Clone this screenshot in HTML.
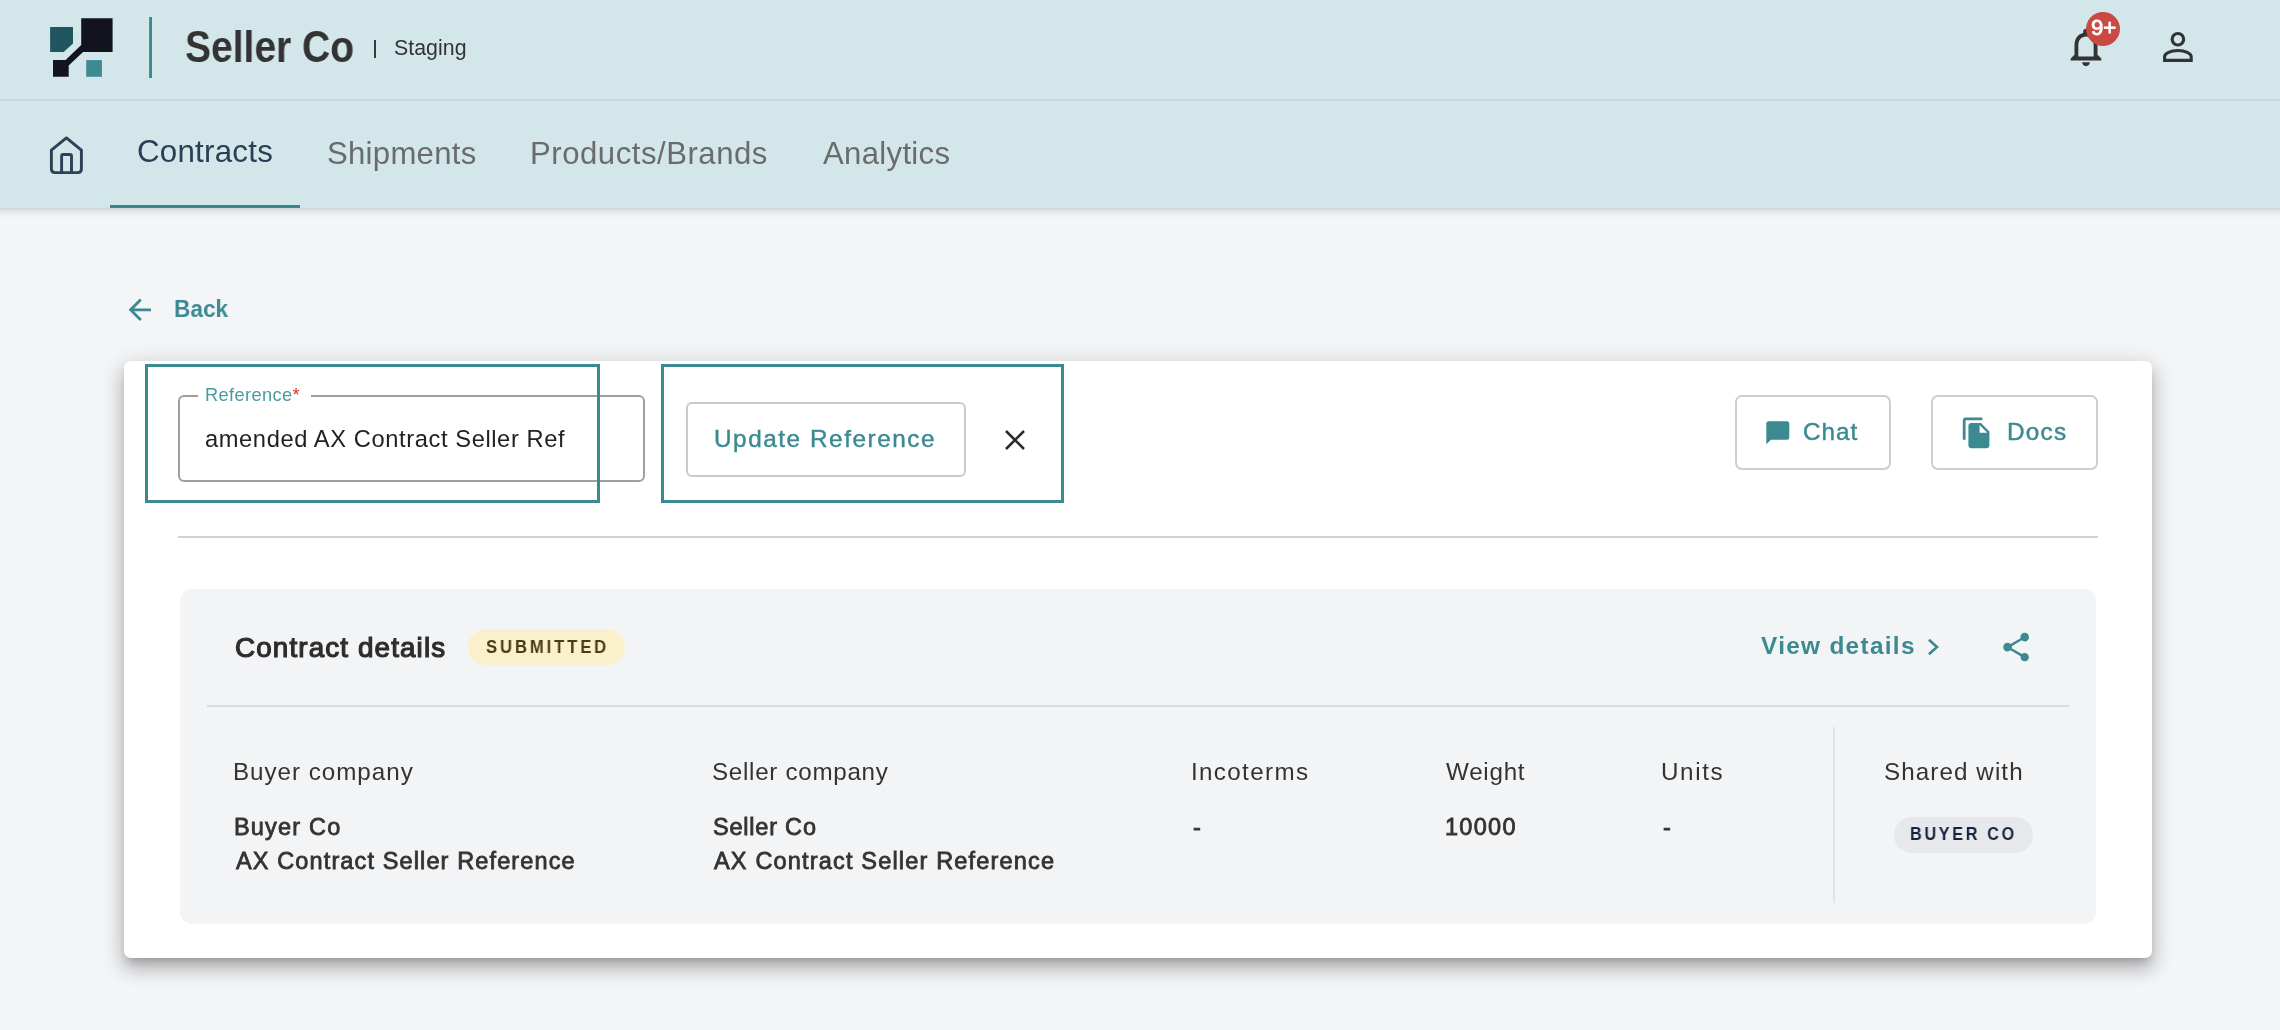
<!DOCTYPE html>
<html><head><meta charset="utf-8"><style>
html,body{margin:0;padding:0;}
body{width:2280px;height:1030px;position:relative;overflow:hidden;background:#f4f5f7;font-family:"Liberation Sans",sans-serif;}
.t{position:absolute;white-space:nowrap;will-change:transform;}
.a{position:absolute;box-sizing:border-box;}
</style></head><body>
<!-- header -->
<div class="a" style="left:0;top:0;width:2280px;height:99px;background:#d3e7ea"></div>
<div class="a" style="left:0;top:99px;width:2280px;height:2px;background:#d4d5db"></div>
<div class="a" style="left:0;top:101px;width:2280px;height:107px;background:#d3e7ea"></div>
<div class="a" style="left:0;top:208px;width:2280px;height:12px;background:linear-gradient(rgba(0,0,0,0.15) 0px,rgba(0,0,0,0.09) 2px,rgba(0,0,0,0.04) 5px,rgba(0,0,0,0.012) 8px,rgba(0,0,0,0) 12px)"></div>
<div class="a" style="left:110px;top:205px;width:190px;height:3px;background:#36868c"></div>
<svg class="a" style="left:0;top:0" width="240" height="100" viewBox="0 0 240 100">
  <path d="M50.1 27.1H73V43.4L63.7 51.9H50.1Z" fill="#215660"/>
  <path d="M81.2 18.2H112.6V51.9H83.1L68.7 65.5V76.8H53V60.1H65.6L81.2 45Z" fill="#13131f"/>
  <rect x="86.2" y="60.1" width="15.7" height="16.7" fill="#3e8a91"/>
  <rect x="149.1" y="17" width="2.9" height="61" fill="#3b8a91"/>
</svg>
<div class="a" style="left:374px;top:39.8px;width:1.6px;height:18px;background:#3a3a3a"></div>
<!-- bell -->
<svg class="a" style="left:2063px;top:24.3px" width="46" height="46" viewBox="0 0 24 24"><path fill="#333" d="M12 22c1.1 0 2-.9 2-2h-4c0 1.1.89 2 2 2zm6-6v-5c0-3.07-1.64-5.64-4.5-6.32V4c0-.83-.67-1.5-1.5-1.5s-1.5.67-1.5 1.5v.68C7.63 5.36 6 7.92 6 11v5l-2 2v1h16v-1l-2-2zm-2 1H8v-6c0-2.48 1.51-4.5 4-4.5s4 2.02 4 4.5v6z"/></svg>
<div class="a" style="left:2086.1px;top:11.6px;width:34px;height:34px;border-radius:50%;background:#c94a44"></div>
<!-- person -->
<svg class="a" style="left:2150px;top:20px" width="60" height="60" viewBox="2150 20 60 60">
  <circle cx="2177.9" cy="39.2" r="5.75" fill="none" stroke="#333" stroke-width="3.15"/>
  <path d="M2164.6 60.35V56.6A13.3 6.1 0 0 1 2191.2 56.6V60.35Z" fill="none" stroke="#333" stroke-width="3.1" stroke-linejoin="miter"/>
</svg>
<!-- home -->
<svg class="a" style="left:40px;top:126px" width="60" height="60" viewBox="40 126 60 60">
  <path d="M66.4 137.9L51.4 150.2V169Q51.4 172.6 55 172.6H77.8Q81.4 172.6 81.4 169V150.2Z" fill="none" stroke="#2d4058" stroke-width="2.9" stroke-linejoin="round"/>
  <path d="M61.6 172.6V156Q61.6 154.5 63.1 154.5H70Q71.5 154.5 71.5 156V172.6" fill="none" stroke="#2d4058" stroke-width="2.9"/>
</svg>
<!-- back arrow -->
<svg class="a" style="left:123.3px;top:293.3px" width="33.6" height="33.6" viewBox="0 0 24 24"><path fill="#3b8a91" d="M20 11H7.83l5.59-5.59L12 4l-8 8 8 8 1.41-1.41L7.83 13H20v-2z"/></svg>
<!-- card -->
<div class="a" style="left:124px;top:361px;width:2028px;height:597px;background:#fff;border-radius:7px;box-shadow:0px 7px 8px -4px rgba(0,0,0,0.2),0px 12px 17px 2px rgba(0,0,0,0.14),0px 5px 22px 4px rgba(0,0,0,0.12)"></div>
<!-- input -->
<div class="a" style="left:178px;top:395.3px;width:467px;height:86.7px;border:2.5px solid #9f9f9f;border-radius:6px"></div>
<div class="a" style="left:197.5px;top:390px;width:113.75px;height:10px;background:#fff"></div>
<!-- teal highlight boxes -->
<div class="a" style="left:144.5px;top:363.5px;width:455px;height:139.5px;border:3px solid #3b8a91"></div>
<div class="a" style="left:660.6px;top:363.5px;width:403px;height:139.9px;border:3px solid #3b8a91"></div>
<!-- update button -->
<div class="a" style="left:686px;top:402px;width:280px;height:75px;border:2px solid #c9cad1;border-radius:6px"></div>
<svg class="a" style="left:1000px;top:425px" width="32" height="32" viewBox="1000 425 32 32"><path d="M1006 431L1024 449M1024 431L1006 449" stroke="#2a2a2a" stroke-width="2.6"/></svg>
<!-- chat / docs buttons -->
<div class="a" style="left:1735px;top:395.4px;width:156px;height:74.6px;border:2px solid #cdced5;border-radius:7px"></div>
<div class="a" style="left:1931.4px;top:395.4px;width:166.4px;height:74.6px;border:2px solid #cdced5;border-radius:7px"></div>
<svg class="a" style="left:1763.7px;top:418.6px" width="27.6" height="27.6" viewBox="0 0 24 24"><path fill="#3b8a91" d="M20 2H4c-1.1 0-2 .9-2 2v18l4-4h14c1.1 0 2-.9 2-2V4c0-1.1-.9-2-2-2z"/></svg>
<svg class="a" style="left:1960.3px;top:415.7px" width="33.6" height="33.6" viewBox="0 0 24 24"><path fill="#3b8a91" d="M16 1H4c-1.1 0-2 .9-2 2v14h2V3h12V1zm-1 4l6 6v10c0 1.1-.9 2-2 2H7.99C6.89 23 6 22.1 6 21l.01-14c0-1.1.89-2 1.99-2h7zm-1 7h5.5L14 6.5V12z"/></svg>
<!-- divider -->
<div class="a" style="left:178px;top:536px;width:1920px;height:2px;background:#cfd1d8"></div>
<!-- panel -->
<div class="a" style="left:180px;top:589px;width:1916px;height:334.5px;background:#f3f4f6;border-radius:12px"></div>
<div class="a" style="left:468.4px;top:628.9px;width:156.6px;height:36px;border-radius:18px;background:#faf0cc"></div>
<svg class="a" style="left:1920px;top:630px" width="30" height="30" viewBox="1920 630 30 30"><path d="M1928.9 639.7L1937 647L1928.9 654.3" fill="none" stroke="#3b8a91" stroke-width="2.6"/></svg>
<svg class="a" style="left:1998.8px;top:630px" width="34.3" height="34.3" viewBox="0 0 24 24"><path fill="#3b8a91" d="M18 16.08c-.76 0-1.44.3-1.96.77L8.91 12.7c.05-.23.09-.46.09-.7s-.04-.47-.09-.7l7.05-4.11c.54.5 1.25.81 2.04.81 1.66 0 3-1.340 3-3s-1.34-3-3-3-3 1.34-3 3c0 .24.04.47.09.7L8.04 9.81C7.5 9.31 6.790 9 6 9c-1.66 0-3 1.34-3 3s1.34 3 3 3c.79 0 1.5-.31 2.04-.81l7.12 4.16c-.05.21-.08.43-.08.65 0 1.61 1.31 2.92 2.92 2.92 1.61 0 2.92-1.31 2.92-2.92s-1.31-2.92-2.92-2.92z"/></svg>
<div class="a" style="left:207px;top:705px;width:1862px;height:2px;background:#d8dadf"></div>
<div class="a" style="left:1833px;top:727.4px;width:2px;height:176px;background:#e2e3e7"></div>
<div class="a" style="left:1893.6px;top:816.9px;width:139.3px;height:36px;border-radius:18px;background:#e6e8ec"></div>
<div class="t" id="sellerco" style="left:185.30px;top:25.72px;font-size:43.50px;line-height:43.50px;font-weight:700;color:#333333;letter-spacing:0.000px;transform:scaleX(0.8966);transform-origin:0 0;">Seller Co</div>
<div class="t" id="staging" style="left:393.70px;top:38.17px;font-size:21.30px;line-height:21.30px;font-weight:400;color:#333333;letter-spacing:0.050px;">Staging</div>
<div class="t" id="contracts" style="left:136.60px;top:136.10px;font-size:31.30px;line-height:31.30px;font-weight:400;color:#2c3e57;letter-spacing:0.237px;">Contracts</div>
<div class="t" id="shipments" style="left:326.70px;top:138.07px;font-size:31.10px;line-height:31.10px;font-weight:400;color:#6b6b6b;letter-spacing:0.288px;">Shipments</div>
<div class="t" id="products" style="left:530.20px;top:138.07px;font-size:31.10px;line-height:31.10px;font-weight:400;color:#6b6b6b;letter-spacing:0.536px;">Products/Brands</div>
<div class="t" id="analytics" style="left:823.00px;top:138.07px;font-size:31.10px;line-height:31.10px;font-weight:400;color:#6b6b6b;letter-spacing:0.325px;">Analytics</div>
<div class="t" id="back" style="left:174.40px;top:296.91px;font-size:24.20px;line-height:24.20px;font-weight:700;color:#3b8a91;letter-spacing:0.000px;transform:scaleX(0.9367);transform-origin:0 0;">Back</div>
<div class="t" id="reflabel" style="left:204.75px;top:386.47px;font-size:18.20px;line-height:18.20px;font-weight:400;color:#4a9aa1;letter-spacing:0.389px;">Reference<span style="color:#e0302a">*</span></div>
<div class="t" id="inputtxt" style="left:204.75px;top:427.93px;font-size:23.70px;line-height:23.70px;font-weight:400;color:#222222;letter-spacing:0.595px;">amended AX Contract Seller Ref</div>
<div class="t" id="update" style="left:714.40px;top:426.53px;font-size:24.30px;line-height:24.30px;font-weight:400;-webkit-text-stroke:0.45px #3b8a91;color:#3b8a91;letter-spacing:1.553px;">Update Reference</div>
<div class="t" id="chat" style="left:1803.40px;top:419.53px;font-size:24.30px;line-height:24.30px;font-weight:400;-webkit-text-stroke:0.45px #3b8a91;color:#3b8a91;letter-spacing:1.000px;">Chat</div>
<div class="t" id="docs" style="left:2006.80px;top:419.53px;font-size:24.30px;line-height:24.30px;font-weight:400;-webkit-text-stroke:0.45px #3b8a91;color:#3b8a91;letter-spacing:1.233px;">Docs</div>
<div class="t" id="cdetails" style="left:234.50px;top:633.76px;font-size:27.80px;line-height:27.80px;font-weight:400;-webkit-text-stroke:1.2px #2d2d2d;color:#2d2d2d;letter-spacing:1.133px;">Contract details</div>
<div class="t" id="submitted" style="left:485.50px;top:637.62px;font-size:18.40px;line-height:18.40px;font-weight:700;color:#4a3b12;letter-spacing:3.200px;transform:scaleX(0.9048);transform-origin:0 0;">SUBMITTED</div>
<div class="t" id="viewdetails" style="left:1760.60px;top:633.94px;font-size:24.40px;line-height:24.40px;font-weight:700;color:#3b8a91;letter-spacing:1.300px;">View details</div>
<div class="t" id="buyercompany" style="left:232.80px;top:759.51px;font-size:24.20px;line-height:24.20px;font-weight:400;color:#333333;letter-spacing:0.975px;">Buyer company</div>
<div class="t" id="buyerco" style="left:233.80px;top:815.50px;font-size:23.50px;line-height:23.50px;font-weight:400;-webkit-text-stroke:0.8px #333333;color:#333333;letter-spacing:1.186px;">Buyer Co</div>
<div class="t" id="axref1" style="left:235.80px;top:849.50px;font-size:23.50px;line-height:23.50px;font-weight:400;-webkit-text-stroke:0.8px #333333;color:#333333;letter-spacing:1.126px;">AX Contract Seller Reference</div>
<div class="t" id="sellercompany" style="left:712.30px;top:759.51px;font-size:24.20px;line-height:24.20px;font-weight:400;color:#333333;letter-spacing:0.700px;">Seller company</div>
<div class="t" id="sellerco2" style="left:713.30px;top:815.50px;font-size:23.50px;line-height:23.50px;font-weight:400;-webkit-text-stroke:0.8px #333333;color:#333333;letter-spacing:0.787px;">Seller Co</div>
<div class="t" id="axref2" style="left:714.30px;top:849.50px;font-size:23.50px;line-height:23.50px;font-weight:400;-webkit-text-stroke:0.8px #333333;color:#333333;letter-spacing:1.174px;">AX Contract Seller Reference</div>
<div class="t" id="incoterms" style="left:1190.80px;top:759.51px;font-size:24.20px;line-height:24.20px;font-weight:400;color:#333333;letter-spacing:1.350px;">Incoterms</div>
<div class="t" id="dash1" style="left:1192.70px;top:815.50px;font-size:23.50px;line-height:23.50px;font-weight:400;-webkit-text-stroke:0.8px #333333;color:#333333;letter-spacing:0.000px;">-</div>
<div class="t" id="weight" style="left:1445.60px;top:759.51px;font-size:24.20px;line-height:24.20px;font-weight:400;color:#333333;letter-spacing:0.740px;">Weight</div>
<div class="t" id="w10000" style="left:1444.60px;top:815.50px;font-size:23.50px;line-height:23.50px;font-weight:400;-webkit-text-stroke:0.8px #333333;color:#333333;letter-spacing:1.275px;">10000</div>
<div class="t" id="units" style="left:1660.80px;top:759.51px;font-size:24.20px;line-height:24.20px;font-weight:400;color:#333333;letter-spacing:1.625px;">Units</div>
<div class="t" id="dash2" style="left:1662.70px;top:815.50px;font-size:23.50px;line-height:23.50px;font-weight:400;-webkit-text-stroke:0.8px #333333;color:#333333;letter-spacing:0.000px;">-</div>
<div class="t" id="sharedwith" style="left:1884.20px;top:759.51px;font-size:24.20px;line-height:24.20px;font-weight:400;color:#333333;letter-spacing:1.090px;">Shared with</div>
<div class="t" id="buyercopill" style="left:1910.25px;top:825.25px;font-size:18.60px;line-height:18.60px;font-weight:700;color:#14243c;letter-spacing:3.000px;transform:scaleX(0.8741);transform-origin:0 0;">BUYER CO</div>
<div class="t" id="nineplus" style="left:2090.50px;top:16.50px;font-size:22.20px;line-height:22.20px;font-weight:400;-webkit-text-stroke:0.8px #ffffff;color:#ffffff;letter-spacing:0.000px;">9+</div>
</body></html>
